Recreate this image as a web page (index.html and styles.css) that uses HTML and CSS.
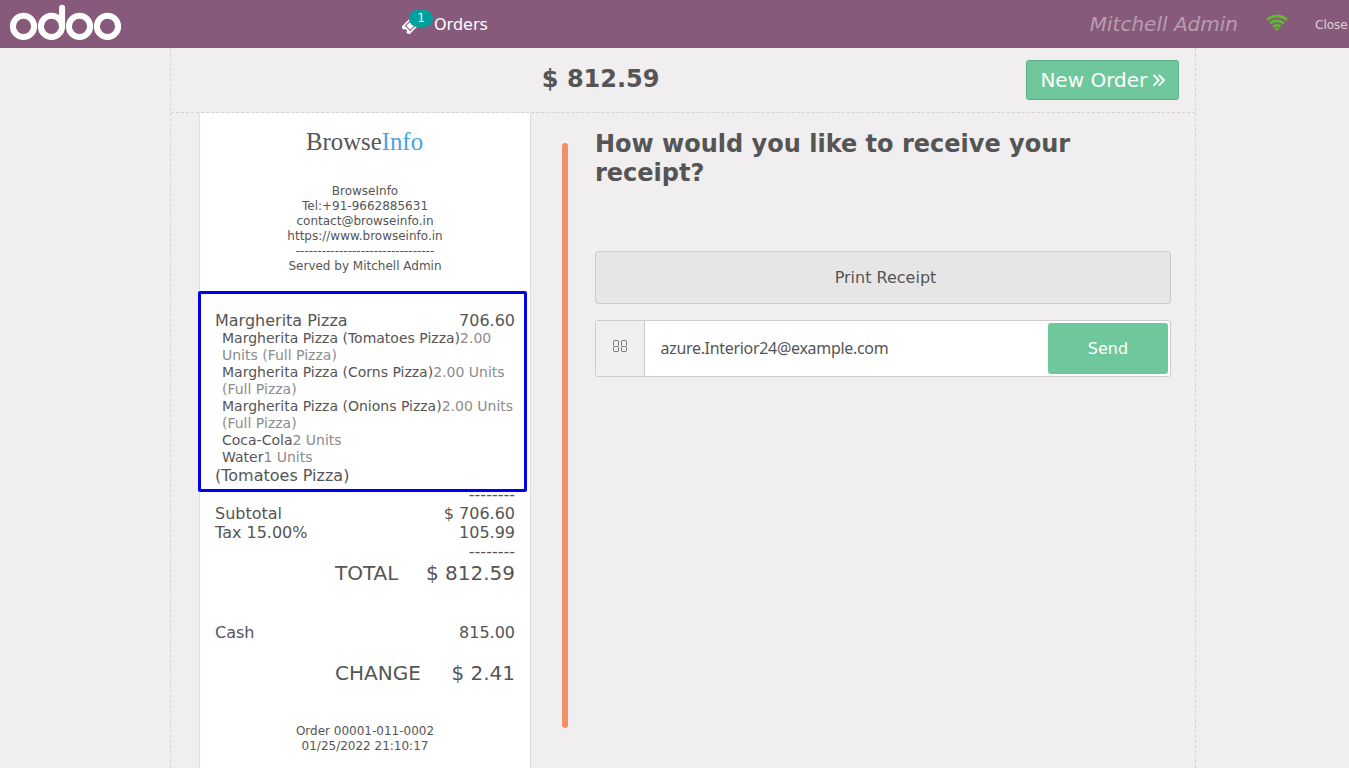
FILE: index.html
```html
<!DOCTYPE html>
<html lang="en">
<head>
<meta charset="utf-8">
<title>Point of Sale - Receipt</title>
<link rel="stylesheet" href="styles.css">
</head>
<body>
<header class="topbar">
  <svg class="logo" width="124" height="48" viewBox="0 0 124 48" fill="none" stroke="#fff" stroke-width="6" stroke-linecap="round" aria-label="odoo">
    <circle cx="23.5" cy="26.4" r="10.6"/><circle cx="51.5" cy="26.4" r="10.6"/><circle cx="79.5" cy="26.4" r="10.6"/><circle cx="107.5" cy="26.4" r="10.6"/>
    <path d="M62.1 7.8V26.4"/>
  </svg>
  <div class="orders">
    <svg class="ticket" width="18" height="18" viewBox="0 0 18 18">
      <g transform="rotate(-45 9 9)">
        <path fill="#fff" d="M.5 3.5h17v3.7a1.8 1.8 0 0 0 0 3.6v3.7H.5v-3.7a1.8 1.8 0 0 0 0-3.6z"/>
        <path fill="none" stroke="#875a7b" stroke-width="1.1" d="M4.6 5.7h8.8v6.6H4.6z"/>
      </g>
    </svg>
    <span class="badge">1</span>
    <span>Orders</span>
  </div>
  <span class="user">Mitchell Admin</span>
  <svg class="wifi" width="22" height="18" viewBox="0 0 22 18" fill="none" stroke="#5fb832" stroke-width="2.9">
    <path d="M1.1 6a14.4 14.4 0 0 1 19.8 0M4.2 9.5a10 10 0 0 1 13.6 0M7.4 12.9a5.4 5.4 0 0 1 7.2 0"/>
    <path d="M9 14.7a3 3 0 0 1 4 0L11 17z" fill="#5fb832" stroke="none"/>
  </svg>
  <span class="close">Close</span>
</header>
<main class="screen">
  <div class="screen-top">
    <h1 class="amount">$ 812.59</h1>
    <button class="next">New Order
      <svg width="13" height="13" viewBox="0 0 13 13" fill="none" stroke="#fff" stroke-width="1.9"><path d="M1.6 1l5 5.3-5 5.3M6.9 1l5 5.3-5 5.3"/></svg>
    </button>
  </div>
  <div class="content">
    <section class="receipt">
      <div class="brand">Browse<span>Info</span></div>
      <div class="contact">
        <div>BrowseInfo</div>
        <div>Tel:+91-9662885631</div>
        <div>contact@browseinfo.in</div>
        <div>https://www.browseinfo.in</div>
        <div>--------------------------------</div>
        <div>Served by Mitchell Admin</div>
      </div>
      <div class="lines">
        <div class="row"><span>Margherita Pizza</span><span>706.60</span></div>
        <ul class="parts">
          <li>Margherita Pizza (Tomatoes Pizza)<span>2.00 Units (Full Pizza)</span></li>
          <li>Margherita Pizza (Corns Pizza)<span>2.00 Units (Full Pizza)</span></li>
          <li>Margherita Pizza (Onions Pizza)<span>2.00 Units (Full Pizza)</span></li>
          <li>Coca-Cola<span>2 Units</span></li>
          <li>Water<span>1 Units</span></li>
        </ul>
        <div class="row">(Tomatoes Pizza)</div>
      </div>
      <div class="row end">--------</div>
      <div class="row"><span>Subtotal</span><span>$ 706.60</span></div>
      <div class="row"><span>Tax 15.00%</span><span>105.99</span></div>
      <div class="row end">--------</div>
      <div class="row big"><span>TOTAL</span><span>$ 812.59</span></div>
      <div class="row cash"><span>Cash</span><span>815.00</span></div>
      <div class="row big change"><span>CHANGE</span><span>$ 2.41</span></div>
      <div class="order-data"><div>Order 00001-011-0002</div><div>01/25/2022 21:10:17</div></div>
    </section>
    <div class="scrollbar"></div>
    <section class="actions">
      <h2>How would you like to receive your receipt?</h2>
      <button class="print">Print Receipt</button>
      <form class="email">
        <span class="email-icon">
          <svg width="15" height="13" viewBox="0 0 15 13" fill="none" stroke="#7c7c7c" stroke-width="1"><path d="M1 .5h4l.5.5v4.5l-.5 1 .5 1V11l-.5.5H1L.5 11V7.500l.5-1-.5-1V1zM1 6.500h4"/><path d="M9 .5h4l.5.5v4.5l-.5 1 .5 1V11l-.5.5H9l-.5-.5V7.500l.5-1-.5-1V1zM9 6.500h4"/></svg>
        </span>
        <span class="address">azure.Interior24@example.com</span>
        <button type="button" class="send">Send</button>
      </form>
    </section>
  </div>
</main>
</body>
</html>
```
FILE: styles.css
```css
* { box-sizing: border-box; }
body {
  margin: 0;
  height: 768px;
  overflow: hidden;
  background: #f0eeee;
  color: #555;
  font: 16px/19px "DejaVu Sans", sans-serif;
}
button { font: inherit; margin: 0; padding: 0; }
h1, h2 { margin: 0; }

.topbar {
  display: flex;
  align-items: center;
  height: 48px;
  background: #875a7b;
  color: #fff;
  white-space: nowrap;
}
.logo { flex: none; }
.orders {
  position: relative;
  display: flex;
  align-items: center;
  margin-left: 278px;
  gap: 14px;
}
.ticket { margin-top: 1px; }
.badge {
  position: absolute;
  left: 7px;
  top: -5px;
  width: 24px;
  height: 17px;
  border-radius: 9px;
  background: #00a09d;
  font-size: 12px;
  line-height: 17px;
  text-align: center;
}
.user {
  margin-left: auto;
  font-size: 20px;
  font-style: italic;
  color: #b89cb0;
}
.wifi { margin: 0 27px 2px 28px; }
.close { width: 34px; padding-top: 2px; font-size: 12px; color: #ddd0da; }

.screen {
  width: 1026px;
  height: 720px;
  margin-left: 170px;
  border: 1px dashed #d3d3d3;
  border-width: 0 1px;
}
.screen-top {
  display: flex;
  justify-content: flex-end;
  align-items: center;
  height: 65px;
  padding-right: 16px;
  border-bottom: 1px dashed #d3d3d3;
}
.amount { margin-right: 366.5px; padding-bottom: 3px; font-size: 24px; line-height: 28px; }
.next {
  width: 153px;
  height: 40px;
  border: 1px solid #5cad85;
  border-radius: 3px;
  background: #6ec89b;
  color: #fff;
  font-size: 20px;
}
.next svg { margin-left: -2px; }

.content { display: flex; height: 655px; }
.receipt {
  width: 332px;
  margin-left: 28px;
  padding: 0 15px;
  border: 1px solid #ddd;
  border-width: 0 1px;
  background: #fff;
}
.brand {
  height: 71px;
  padding: 14px 1px 0 0;
  font: 24.8px/29px "Liberation Serif", serif;
  text-align: center;
}
.brand span { color: #46a3e6; }
.contact, .order-data { font-size: 12px; line-height: 15px; text-align: center; }
.lines {
  margin: 17px -12px 0 -17px;
  height: 201px;
  padding: 17px 9px 0 14px;
  border: 3px solid #0000f0;
  border-radius: 2px;
}
.row { display: flex; justify-content: space-between; }
.end { justify-content: flex-end; }
.lines + .end { margin-top: -7px; }
.parts {
  margin: 0 0 0 7px;
  padding: 0;
  list-style: none;
  font-size: 14px;
  line-height: 17px;
}
.parts span { color: #8c8c8c; }
.big { padding-left: 120px; font-size: 20px; line-height: 24px; }
.cash { margin-top: 38px; }
.change { margin-top: 19px; }
.order-data { margin-top: 39px; }

.scrollbar {
  width: 6px;
  height: 585px;
  margin: 30px 27px 0 31px;
  border-radius: 3px;
  background: #f28f68;
}
.actions { width: 576px; padding-top: 17px; }
.actions h2 { height: 121px; font-size: 24px; line-height: 29px; }
.print {
  display: block;
  width: 576px;
  height: 53px;
  padding-left: 5px;
  border: 1px solid #ccc;
  border-radius: 3px;
  background: #e6e6e6;
  color: #555;
}
.email {
  display: flex;
  height: 57px;
  margin-top: 16px;
  border: 1px solid #ccc;
  border-radius: 3px;
  background: #fff;
}
.email-icon {
  width: 49px;
  padding: 19px 0 0 17px;
  border-right: 1px solid #ccc;
  background: #f0eeee;
  line-height: 0;
}
.address {
  flex: 1;
  padding-left: 15.500px;
  font-family: "Noto Sans", sans-serif;
  font-size: 16px;
  letter-spacing: -0.31px;
  line-height: 55px;
}
.send {
  width: 120px;
  height: 51px;
  margin: 2px;
  border: 0;
  border-radius: 3px;
  background: #6ec89b;
  color: #fff;
}
```
